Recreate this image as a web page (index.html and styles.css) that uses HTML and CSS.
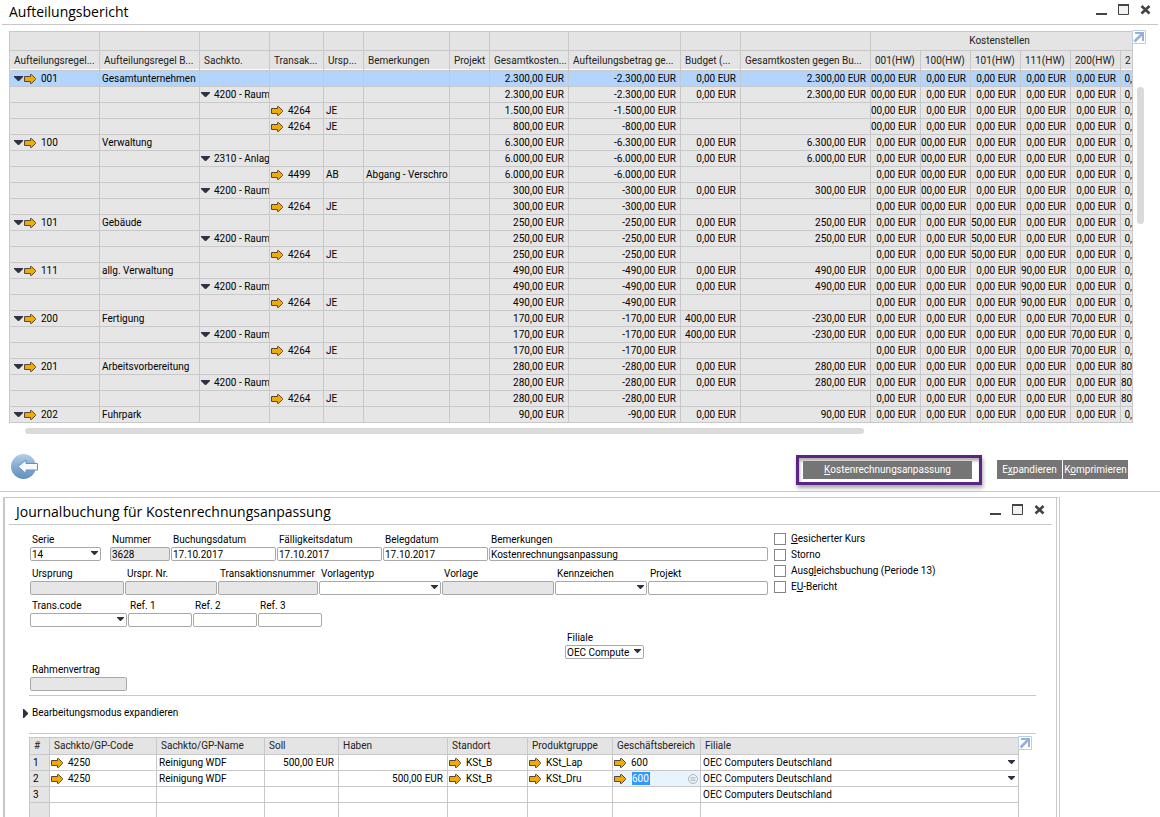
FILE: index.html
```html
<!DOCTYPE html>
<html lang="de">
<head>
  <meta charset="UTF-8" />
  <meta name="viewport" content="width=device-width, initial-scale=1.0" />
  <title>Aufteilungsbericht</title>
  <link rel="stylesheet" href="styles.css">
</head>

<body>
  <svg width="0" height="0" class="defs" aria-hidden="true">
    <symbol id="link" viewBox="0 0 12 10">
      <path d="M.5 2.5h6v-2h1l4 4v1l-4 4h-1v-2h-6z" fill="#f0ab00" stroke="#54463c" />
    </symbol>
    <symbol id="down" viewBox="0 0 9 5">
      <path d="M0 0h9v1L5 5H4L0 1z" fill="#2f3040" />
    </symbol>
    <symbol id="right" viewBox="0 0 5 9">
      <path d="M0 0h1l4 4v1L1 9H0z" fill="#2f3040" />
    </symbol>
    <symbol id="min" viewBox="0 0 11 11">
      <path d="M0 9h11v2H0z" fill="#444" />
    </symbol>
    <symbol id="max" viewBox="0 0 11 11">
      <path d="M.5 1h10v9.500H.5z" fill="#f2f2f2" stroke="#444" />
      <path d="M0 0h11v2H0z" fill="#444" />
    </symbol>
    <symbol id="close" viewBox="0 0 11 11">
      <path d="M1.500 2l8 7.500M9.500 2l-8 7.500" fill="none" stroke="#444" stroke-width="2.600" />
    </symbol>
    <symbol id="expand" viewBox="0 0 14 14">
      <path d="M.5.5h13v13H.5z" fill="#fff" stroke="#b9d0e6" />
      <path d="M2.500 11.500L10 4" stroke="#98b0d4" stroke-width="2.600" />
      <path d="M3 2h9v9h-2V4H3z" fill="#98b0d4" />
    </symbol>
  </svg>

  <section class="window report">
    <header class="titlebar">
      <h1>Aufteilungsbericht</h1>
      <div class="win-buttons">
        <button aria-label="Minimieren"><svg><use href="#min" /></svg></button>
        <button aria-label="Maximieren"><svg><use href="#max" /></svg></button>
        <button aria-label="Schließen"><svg><use href="#close" /></svg></button>
      </div>
    </header>

    <div class="grid-area">
      <div class="grid-clip">
        <table class="grid">
          <colgroup>
            <col class="c90"><col class="c100"><col class="c70"><col class="c54"><col class="c40">
            <col class="c86"><col class="c40"><col class="c79"><col class="c112"><col class="c60">
            <col class="c130"><col class="c50"><col class="c50"><col class="c50"><col class="c50">
            <col class="c50"><col>
          </colgroup>
          <thead>
            <tr class="group">
              <td></td><td></td><td></td><td></td><td></td><td></td><td></td><td></td><td></td><td></td><td></td>
              <th colspan="6">Kostenstellen</th>
            </tr>
            <tr>
              <th>Aufteilungsregel...</th>
              <th>Aufteilungsregel B...</th>
              <th>Sachkto.</th>
              <th>Transak...</th>
              <th>Ursp...</th>
              <th>Bemerkungen</th>
              <th>Projekt</th>
              <th>Gesamtkosten...</th>
              <th>Aufteilungsbetrag ge...</th>
              <th>Budget (...</th>
              <th>Gesamtkosten gegen Bu...</th>
              <th>001(HW)</th>
              <th>100(HW)</th>
              <th>101(HW)</th>
              <th>111(HW)</th>
              <th>200(HW)</th>
              <th>2</th>
            </tr>
          </thead>
          <tbody id="reportRows"></tbody>
        </table>
      </div>
      <div class="gutter">
        <button class="expand" aria-label="Vergrößern"><svg><use href="#expand" /></svg></button>
        <div class="v-thumb"></div>
      </div>
    </div>
    <div class="h-thumb"></div>

    <footer class="actions">
      <button class="back" aria-label="Zurück">
        <svg viewBox="0 0 27 26">
          <defs>
            <linearGradient id="ball" x1="0" y1="0" x2="0" y2="1">
              <stop offset="0" stop-color="#b4cfe9" />
              <stop offset=".5" stop-color="#85aad3" />
              <stop offset="1" stop-color="#638fbd" />
            </linearGradient>
          </defs>
          <circle cx="12.500" cy="12.500" r="12.500" fill="url(#ball)" />
          <path d="M7 12.500L15 6v3.500h11.500v6.500H15v3.500z" fill="#f7f9fc" stroke="#6c8fb8" />
        </svg>
      </button>
      <div class="highlight">
        <button class="btn"><u>K</u>ostenrechnungsanpassung</button>
      </div>
      <div class="pair">
        <button class="btn">E<u>x</u>pandieren</button>
        <button class="btn">K<u>o</u>mprimieren</button>
      </div>
    </footer>
  </section>

  <section class="window journal">
    <header class="titlebar">
      <h2>Journalbuchung für Kostenrechnungsanpassung</h2>
      <div class="win-buttons">
        <button aria-label="Minimieren"><svg><use href="#min" /></svg></button>
        <button aria-label="Maximieren"><svg><use href="#max" /></svg></button>
        <button aria-label="Schließen"><svg><use href="#close" /></svg></button>
      </div>
    </header>

    <form class="form">
      <div class="fields">
        <div class="row first">
          <div class="field serie">
            <label for="serie">Serie</label>
            <div class="select"><select id="serie"><option>14</option></select><svg><use href="#down" /></svg></div>
          </div>
          <div class="field nummer">
            <label for="nummer">Nummer</label>
            <input id="nummer" type="text" value="3628" readonly>
          </div>
          <div class="field date">
            <label for="buchung">Buchungsdatum</label>
            <input id="buchung" type="text" value="17.10.2017">
          </div>
          <div class="field date">
            <label for="faellig">Fälligkeitsdatum</label>
            <input id="faellig" type="text" value="17.10.2017">
          </div>
          <div class="field date">
            <label for="beleg">Belegdatum</label>
            <input id="beleg" type="text" value="17.10.2017">
          </div>
          <div class="field grow">
            <label for="bemerkung">Bemerkungen</label>
            <input id="bemerkung" type="text" value="Kostenrechnungsanpassung">
          </div>
        </div>

        <div class="row">
          <div class="field ursprung">
            <label for="ursprung">Ursprung</label>
            <input id="ursprung" type="text" readonly>
          </div>
          <div class="field small">
            <label for="ursprNr">Urspr. Nr.</label>
            <input id="ursprNr" type="text" readonly>
          </div>
          <div class="field transnr">
            <label for="transNr">Transaktionsnummer</label>
            <input id="transNr" type="text" readonly>
          </div>
          <div class="field typ">
            <label for="typ">Vorlagentyp</label>
            <div class="select"><select id="typ"><option></option></select><svg><use href="#down" /></svg></div>
          </div>
          <div class="field vorlage">
            <label for="vorlage">Vorlage</label>
            <input id="vorlage" type="text" readonly>
          </div>
          <div class="field small">
            <label for="kennz">Kennzeichen</label>
            <div class="select"><select id="kennz"><option></option></select><svg><use href="#down" /></svg></div>
          </div>
          <div class="field grow">
            <label for="projekt">Projekt</label>
            <input id="projekt" type="text">
          </div>
        </div>

        <div class="row">
          <div class="field code">
            <label for="code">Trans.code</label>
            <div class="select"><select id="code"><option></option></select><svg><use href="#down" /></svg></div>
          </div>
          <div class="field ref">
            <label for="ref1">Ref. 1</label>
            <input id="ref1" type="text">
          </div>
          <div class="field ref">
            <label for="ref2">Ref. 2</label>
            <input id="ref2" type="text">
          </div>
          <div class="field ref">
            <label for="ref3">Ref. 3</label>
            <input id="ref3" type="text">
          </div>
        </div>

        <div class="row branch">
          <div class="field filiale">
            <label for="filiale">Filiale</label>
            <div class="select"><select id="filiale"><option>OEC Compute</option></select><svg><use href="#down" /></svg></div>
          </div>
        </div>

        <div class="row">
          <div class="field code">
            <label for="rahmen">Rahmenvertrag</label>
            <input id="rahmen" type="text" readonly>
          </div>
        </div>
      </div>

      <div class="checks">
        <label><input type="checkbox"><span><u>G</u>esicherter Kurs</span></label>
        <label><input type="checkbox"><span>Storno</span></label>
        <label><input type="checkbox"><span>Ausg<u>l</u>eichsbuchung (Periode 13)</span></label>
        <label><input type="checkbox"><span>E<u>U</u>-Bericht</span></label>
      </div>
    </form>

    <div class="edit-mode">
      <button type="button"><svg><use href="#right" /></svg>Bearbeitungsmodus expandieren</button>
    </div>

    <div class="lines">
      <table class="grid">
        <colgroup>
          <col class="c20"><col class="c107"><col class="c108"><col class="c74"><col class="c109">
          <col class="c80"><col class="c85"><col class="c88"><col>
        </colgroup>
        <thead>
          <tr>
            <th>#</th>
            <th>Sachkto/GP-Code</th>
            <th>Sachkto/GP-Name</th>
            <th>Soll</th>
            <th>Haben</th>
            <th>Standort</th>
            <th>Produktgruppe</th>
            <th>Geschäftsbereich</th>
            <th>Filiale</th>
          </tr>
        </thead>
        <tbody>
          <tr>
            <th>1</th>
            <td class="linked"><div class="cell"><svg class="link"><use href="#link" /></svg>4250</div></td>
            <td>Reinigung WDF</td>
            <td class="num">500,00 EUR</td>
            <td class="num"></td>
            <td class="linked"><div class="cell"><svg class="link"><use href="#link" /></svg>KSt_B</div></td>
            <td class="linked"><div class="cell"><svg class="link"><use href="#link" /></svg>KSt_Lap</div></td>
            <td class="linked"><div class="cell"><svg class="link"><use href="#link" /></svg>600</div></td>
            <td><div class="select"><select aria-label="Filiale Zeile 1"><option>OEC Computers Deutschland</option></select><svg><use href="#down" /></svg></div></td>
          </tr>
          <tr>
            <th>2</th>
            <td class="linked"><div class="cell"><svg class="link"><use href="#link" /></svg>4250</div></td>
            <td>Reinigung WDF</td>
            <td class="num"></td>
            <td class="num">500,00 EUR</td>
            <td class="linked"><div class="cell"><svg class="link"><use href="#link" /></svg>KSt_B</div></td>
            <td class="linked"><div class="cell"><svg class="link"><use href="#link" /></svg>KSt_Dru</div></td>
            <td class="linked active">
              <div class="cell">
                <svg class="link"><use href="#link" /></svg>
                <input type="text" value="600" aria-label="Geschäftsbereich Zeile 2">
                <svg class="choose" viewBox="0 0 10 10">
                  <circle cx="5" cy="5" r="4.500" fill="#eef3f7" stroke="#a9b4c0" />
                  <path d="M2.500 3.500h5M2.500 5h5M2.500 6.500h5" stroke="#a9b4c0" stroke-width=".8" />
                </svg>
              </div>
            </td>
            <td><div class="select"><select aria-label="Filiale Zeile 2"><option>OEC Computers Deutschland</option></select><svg><use href="#down" /></svg></div></td>
          </tr>
          <tr>
            <th>3</th>
            <td></td><td></td><td></td><td></td><td></td><td></td><td></td>
            <td>OEC Computers Deutschland</td>
          </tr>
          <tr class="rest">
            <th></th>
            <td></td><td></td><td></td><td></td><td></td><td></td><td></td><td></td>
          </tr>
        </tbody>
      </table>
      <button class="expand" aria-label="Vergrößern"><svg><use href="#expand" /></svg></button>
    </div>
  </section>

  <script src="report.js"></script>
</body>
</html>
```

FILE: styles.css
```css
:root {
  --line: #c8c8c8;
  --cell: #e6e6e6;
  --head: #e4e4e4;
  --selected: #b3d4fc;
  --field-line: #a9a9a9;
  --btn: #757575;
  --mark: #5c2483;
}

* {
  box-sizing: border-box;
}

body {
  margin: 0;
  height: 100vh;
  overflow: hidden;
  display: flex;
  flex-direction: column;
  background: #fff;
  color: #000;
  font: 10px/14px Roboto, "Noto Sans", sans-serif;
}

button,
input,
select {
  font: inherit;
  color: inherit;
  margin: 0;
  padding: 0;
  border: 0;
  border-radius: 0;
  background: none;
}

button {
  cursor: pointer;
}

svg {
  display: block;
  flex: none;
}

.defs {
  position: absolute;
}

/* windows */

.titlebar {
  display: flex;
  justify-content: space-between;
  border-bottom: 1px solid var(--line);
}

h1,
h2 {
  margin: 0;
  font-family: "Open Sans", "Noto Sans", sans-serif;
  font-size: 14px;
  line-height: 23px;
  font-weight: 400;
}

.win-buttons {
  display: flex;
  gap: 11px;
}

.win-buttons button,
.win-buttons svg {
  width: 11px;
  height: 11px;
}

.report {
  border-bottom: 1px solid var(--line);
}

.report .titlebar {
  height: 25px;
  margin: 0 2px;
  padding: 0 7px;
}

.report .win-buttons {
  padding-top: 4px;
}

/* data grids */

.grid {
  width: 100%;
  table-layout: fixed;
  border-collapse: separate;
  border-spacing: 0;
}

.grid th,
.grid td {
  height: 16px;
  padding: 0 0 0 2px;
  border-right: 1px solid var(--line);
  border-bottom: 1px solid var(--line);
  font-weight: 400;
  text-align: left;
  white-space: nowrap;
  overflow: hidden;
  line-height: 14px;
}

.grid thead th,
.grid thead td {
  padding-left: 4px;
  background: var(--head);
  color: #222;
}

.grid td.num {
  padding: 0 4px 0 0;
  text-align: right;
}

.grid td.last {
  padding: 0;
}

.grid td.linked {
  padding-left: 1px;
}

.cell {
  display: flex;
  align-items: center;
  height: 14px;
}

.link {
  width: 12px;
  height: 10px;
}

.down {
  width: 9px;
  height: 5px;
}

.c20 { width: 20px; }
.c40 { width: 40px; }
.c50 { width: 50px; }
.c54 { width: 54px; }
.c60 { width: 60px; }
.c70 { width: 70px; }
.c74 { width: 74px; }
.c79 { width: 79px; }
.c80 { width: 80px; }
.c85 { width: 85px; }
.c86 { width: 86px; }
.c88 { width: 88px; }
.c90 { width: 90px; }
.c100 { width: 100px; }
.c107 { width: 107px; }
.c108 { width: 108px; }
.c109 { width: 109px; }
.c112 { width: 112px; }
.c130 { width: 130px; }

.grid-area {
  display: flex;
  padding: 6px 0 0 9px;
}

.grid-clip {
  flex: 1;
  min-width: 0;
  overflow: hidden;
  border: solid var(--line);
  border-width: 1px 0 0 1px;
}

.grid-clip td {
  background: var(--cell);
}

.grid-clip thead .group th,
.grid-clip thead .group td {
  height: 19px;
}

.grid-clip thead .group th {
  padding: 0 4px 0 0;
  text-align: center;
}

.grid-clip thead tr + tr th {
  height: 20px;
  box-shadow: inset 0 -1px #fff;
}

.grid-clip .selected td {
  background: var(--selected);
}

.rule {
  padding-left: 2px;
}

.rule .link {
  margin: 0 5px 0 1px;
}

.account .down {
  margin-right: 4px;
}

.trans .link {
  margin-right: 5px;
}

.gutter {
  width: 27px;
}

.expand,
.expand svg {
  display: block;
  width: 14px;
  height: 14px;
}

.expand {
  margin-left: -1px;
}

.gutter .expand {
  margin-top: -1px;
}

.v-thumb {
  width: 7px;
  height: 137px;
  margin: 43px 0 0 4px;
  border-radius: 4px;
  background: #dadada;
}

.h-thumb {
  height: 6px;
  margin: 5px 296px 0 25px;
  border-radius: 3px;
  background: #dadada;
}

.actions {
  display: flex;
  align-items: flex-start;
  height: 57px;
  padding: 14px 32px 0 11px;
}

.back {
  margin: 6px auto 0 0;
}

.back svg {
  width: 27px;
  height: 26px;
}

.btn {
  height: 19px;
  background: var(--btn);
  color: #fff;
  line-height: 18px;
  white-space: nowrap;
}

.highlight {
  display: flex;
  width: 186px;
  height: 30px;
  margin: 7px 15px 0 0;
  padding: 3px 7px 3px 4px;
  border: 3px solid var(--mark);
  box-shadow: 1px 3px 4px rgba(0, 0, 0, 0.35), inset 1px 3px 3px rgba(0, 0, 0, 0.3);
}

.highlight .btn {
  flex: 1;
  height: 18px;
}

.pair {
  display: flex;
  gap: 1px;
  margin-top: 12px;
}

.pair .btn {
  width: 65px;
}

/* journal entry */

.journal {
  flex: 1;
  min-height: 0;
  overflow: hidden;
  margin: 5px 100px 0 3px;
  border: solid var(--line);
  border-width: 1px 4px 0 2px;
  border-right-style: double;
}

.journal .titlebar {
  height: 27px;
  margin: 0 4px;
  padding: 2px 7px 0;
}

.journal .win-buttons {
  padding-top: 4px;
}

.form {
  display: flex;
  gap: 6px;
  margin: 8px 20px 0 24px;
  padding: 0 0 4px 1px;
  border-bottom: 1px solid var(--line);
}

.fields {
  flex: none;
  width: 738px;
  display: flex;
  flex-direction: column;
  gap: 4px;
}

.row {
  display: flex;
  gap: 1px;
}

.first {
  padding-bottom: 2px;
}

.field label {
  display: block;
  height: 14px;
  padding-left: 2px;
  white-space: nowrap;
}

.field input,
.field select {
  display: block;
  width: 100%;
  height: 14px;
  padding: 1px 1px 0;
  border: 1px solid var(--field-line);
  border-radius: 2px;
  background: #fff;
  line-height: 11px;
}

.field input[readonly] {
  background: var(--cell);
}

.select {
  position: relative;
}

.select select {
  appearance: none;
}

.select svg {
  position: absolute;
  top: 4px;
  right: 3px;
  width: 7px;
  height: 4px;
  pointer-events: none;
}

.serie { width: 71px; margin-right: 8px; }
.nummer { width: 60px; }
.date { width: 105px; }
.ursprung { width: 94px; }
.small { width: 92px; }
.transnr { width: 100px; }
.typ { width: 122px; }
.vorlage { width: 112px; }
.code { width: 97px; }
.ref { width: 64px; }
.filiale { width: 79px; }
.grow { flex: 1; }

.branch {
  justify-content: flex-end;
  padding-right: 124px;
}

.checks {
  display: flex;
  flex-direction: column;
  gap: 4px;
}

.checks label {
  display: flex;
  align-items: center;
  gap: 5px;
  height: 12px;
}

.checks span {
  line-height: 16px;
}

.checks input {
  appearance: none;
  width: 12px;
  height: 12px;
  border: 1px solid #858585;
}

.edit-mode {
  display: flex;
  align-items: center;
  height: 38px;
  margin: 0 20px 0 24px;
  padding-bottom: 3px;
  border-bottom: 1px solid var(--line);
}

.edit-mode button {
  display: flex;
  align-items: center;
  gap: 4px;
  margin-left: -6px;
}

.edit-mode svg {
  width: 5px;
  height: 9px;
}

.lines {
  display: flex;
  align-items: flex-start;
  margin: 2px 24px 0 24px;
}

.lines .grid {
  flex: 1;
  min-width: 0;
  margin-top: 1px;
  border: solid var(--line);
  border-width: 1px 0 0 1px;
}

.lines thead th {
  height: 17px;
}

.lines tbody th {
  padding-left: 3px;
  background: var(--head);
}

.lines thead th:first-child {
  padding-left: 4px;
}

.lines .link {
  margin-right: 5px;
}

.lines td .select select {
  display: block;
  width: 100%;
  height: 14px;
  padding: 0;
}

.active {
  background: #e8f4fd;
}

.active input {
  width: 18px;
  height: 13px;
  margin-left: 1px;
  background: #3399ff;
  border-right: 1px solid #c96a1b;
  color: #fff;
}

.active .choose {
  width: 10px;
  height: 10px;
  margin: 0 2px 0 auto;
}

.rest th,
.rest td {
  height: 80px;
}
```

FILE: report.js
```js
// cc: index of the cost centre that carries the amount, and the amount
const rows = [
  { rule: "001", name: "Gesamtunternehmen", sum: "2.300,00", budget: "0,00", diff: "2.300,00", cc: [0, "00,00 EUR"], selected: true },
  { account: "4200 - Raum", sum: "2.300,00", budget: "0,00", diff: "2.300,00", cc: [0, "00,00 EUR"] },
  { trans: "4264", origin: "JE", sum: "1.500,00", cc: [0, "00,00 EUR"] },
  { trans: "4264", origin: "JE", sum: "800,00", cc: [0, "00,00 EUR"] },
  { rule: "100", name: "Verwaltung", sum: "6.300,00", budget: "0,00", diff: "6.300,00", cc: [1, "00,00 EUR"] },
  { account: "2310 - Anlag", sum: "6.000,00", budget: "0,00", diff: "6.000,00", cc: [1, "00,00 EUR"] },
  { trans: "4499", origin: "AB", remark: "Abgang - Verschro", sum: "6.000,00", cc: [1, "00,00 EUR"] },
  { account: "4200 - Raum", sum: "300,00", budget: "0,00", diff: "300,00", cc: [1, "00,00 EUR"] },
  { trans: "4264", origin: "JE", sum: "300,00", cc: [1, "00,00 EUR"] },
  { rule: "101", name: "Gebäude", sum: "250,00", budget: "0,00", diff: "250,00", cc: [2, "50,00 EUR"] },
  { account: "4200 - Raum", sum: "250,00", budget: "0,00", diff: "250,00", cc: [2, "50,00 EUR"] },
  { trans: "4264", origin: "JE", sum: "250,00", cc: [2, "50,00 EUR"] },
  { rule: "111", name: "allg. Verwaltung", sum: "490,00", budget: "0,00", diff: "490,00", cc: [3, "90,00 EUR"] },
  { account: "4200 - Raum", sum: "490,00", budget: "0,00", diff: "490,00", cc: [3, "90,00 EUR"] },
  { trans: "4264", origin: "JE", sum: "490,00", cc: [3, "90,00 EUR"] },
  { rule: "200", name: "Fertigung", sum: "170,00", budget: "400,00", diff: "-230,00", cc: [4, "70,00 EUR"] },
  { account: "4200 - Raum", sum: "170,00", budget: "400,00", diff: "-230,00", cc: [4, "70,00 EUR"] },
  { trans: "4264", origin: "JE", sum: "170,00", cc: [4, "70,00 EUR"] },
  { rule: "201", name: "Arbeitsvorbereitung", sum: "280,00", budget: "0,00", diff: "280,00", cc: [5, "80,"] },
  { account: "4200 - Raum", sum: "280,00", budget: "0,00", diff: "280,00", cc: [5, "80,"] },
  { trans: "4264", origin: "JE", sum: "280,00", cc: [5, "80,"] },
  { rule: "202", name: "Fuhrpark", sum: "90,00", budget: "0,00", diff: "90,00" }
];

const icon = (name) => `<svg class="${name}"><use href="#${name}" /></svg>`;
const cell = (cls, icons, text) =>
  text ? `<td class="${cls === "rule" ? "" : "linked"}"><div class="cell ${cls}">${icons}${text}</div></td>` : "<td></td>";
const num = (v) => `<td class="num">${v}</td>`;
const money = (v) => num(v ? v + " EUR" : "");

document.getElementById("reportRows").innerHTML = rows.map((r) => {
  const centres = Array(5).fill("0,00 EUR").concat("0,");
  if (r.cc) centres[r.cc[0]] = r.cc[1];
  return `<tr class="${r.selected ? "selected" : ""}">
    ${cell("rule", icon("down") + icon("link"), r.rule)}
    <td>${r.name || ""}</td>
    ${cell("account", icon("down"), r.account)}
    ${cell("trans", icon("link"), r.trans)}
    <td>${r.origin || ""}</td>
    <td>${r.remark || ""}</td>
    <td></td>
    ${money(r.sum)}${money("-" + r.sum)}${money(r.budget)}${money(r.diff)}
    ${centres.slice(0, 5).map(num).join("")}
    <td class="num last">${centres[5]}</td>
  </tr>`;
}).join("");
```
